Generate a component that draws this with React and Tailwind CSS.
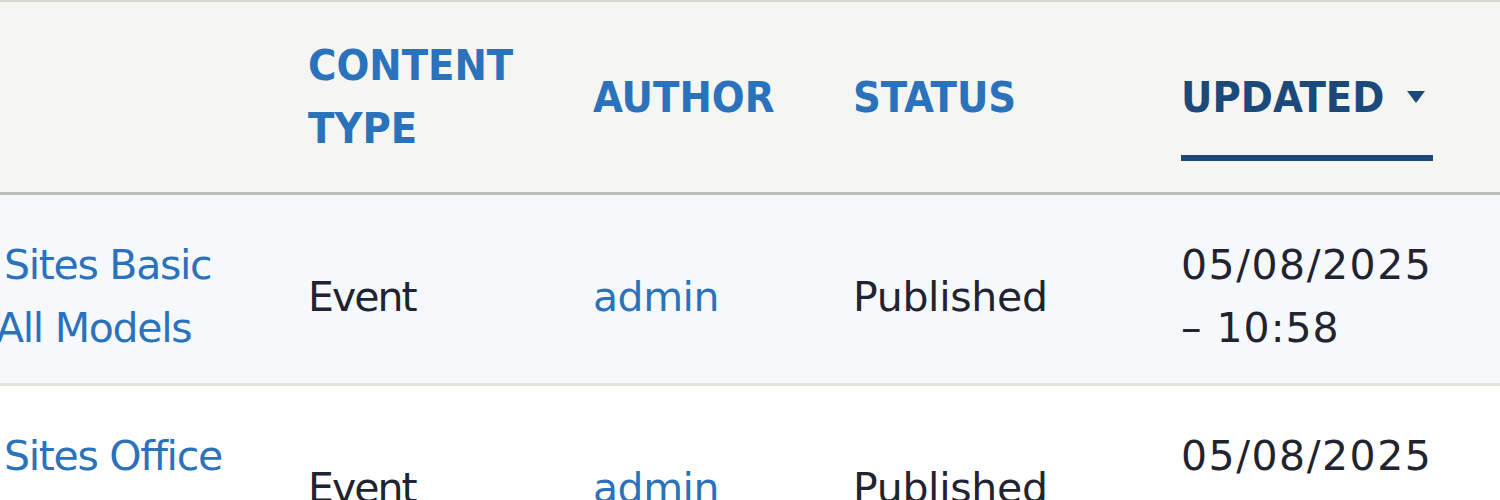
import React from "react";

function Row({ title, date, time, bg }) {
  return (
    <div className={`flex h-[191px] items-center border-b-[3px] border-[#e6e4df] pt-[16px] ${bg}`}>
      <div className="w-[308px] shrink-0">
        <a className="-ml-[4px] block w-[250px] indent-[8px] tracking-[-1.3px] text-[#2a72bb] leading-[63px]">{title}</a>
      </div>
      <div className="w-[285px] shrink-0 tracking-[-2px] text-[#222330] leading-[63px]">Event</div>
      <div className="w-[260px] shrink-0">
        <a className="tracking-[-0.5px] text-[#2a72bb] leading-[63px]">admin</a>
      </div>
      <div className="w-[328px] shrink-0 tracking-[-0.3px] text-[#222330] leading-[63px]">Published</div>
      <div className="flex-1 text-[#222330] leading-[63px]">
        <div className="tracking-[1.5px]">{date}</div>
        <div className="tracking-[1px]">{time}</div>
      </div>
    </div>
  );
}

export default function App() {
  const head =
    "font-['DejaVu_Sans_Condensed','DejaVu_Sans',sans-serif] font-bold uppercase text-[43px] leading-[63px]";
  return (
    <div className="w-[1500px] h-[500px] overflow-hidden bg-white font-['DejaVu_Sans',sans-serif] text-[41px]">
      <div className="flex h-[195px] items-center border-t-[2px] border-b-[3px] border-t-[#d6d6d1] border-b-[#bfbfba] bg-[#f5f5f2]">
        <div className="w-[308px] shrink-0" />
        <div className={`w-[285px] shrink-0 text-[#2a72bb] ${head}`}>
          <div className="w-[240px]">Content Type</div>
        </div>
        <div className={`w-[260px] shrink-0 text-[#2a72bb] ${head}`}>Author</div>
        <div className={`w-[328px] shrink-0 text-[#2a72bb] ${head}`}>Status</div>
        <div className="flex-1">
          <div className="flex w-[252px] items-center border-b-[6px] border-[#1b4a7a] pt-[32px] pb-[26px]">
            <span className={`${head} text-[#1b4a7a]`}>Updated</span>
            <svg className="ml-[23px]" width="18" height="12" viewBox="0 0 18 12">
              <path d="M0 0 L18 0 L9 12 Z" fill="#1b4a7a" />
            </svg>
          </div>
        </div>
      </div>
      <Row title="Sites Basic All Models" date="05/08/2025" time="– 10:58" bg="bg-[#f6f9fc]" />
      <Row title="Sites Office All Models" date="05/08/2025" time="– 10:58" bg="bg-white" />
    </div>
  );
}
